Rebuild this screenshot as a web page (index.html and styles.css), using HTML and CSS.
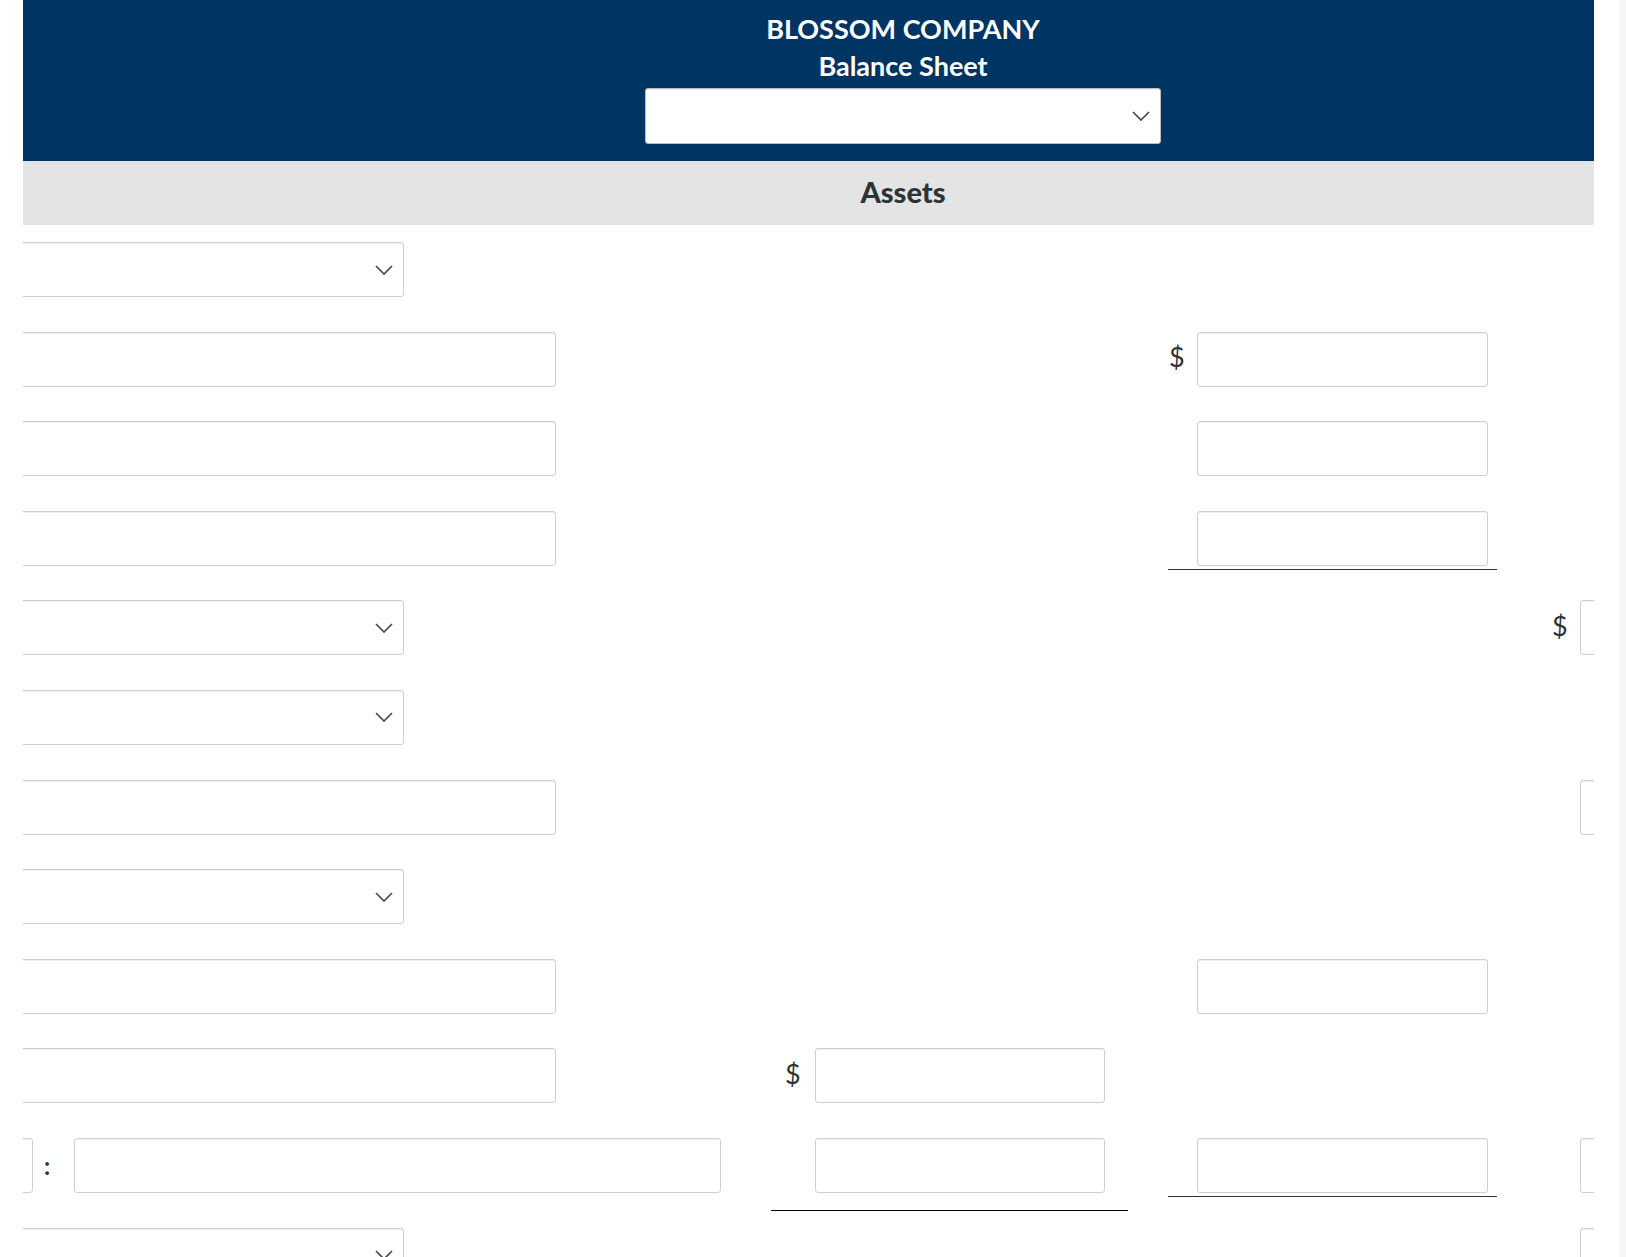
FILE: index.html
```html
<!DOCTYPE html>
<html lang="en">
<head>
<meta charset="utf-8">
<title>Blossom Company Balance Sheet</title>
<link rel="stylesheet" href="styles.css">
</head>
<body>
<div class="page">
  <div class="gutter-left"></div>
  <div class="viewport">
    <div class="sheet">
      <header class="sheet-head">
        <div class="title">BLOSSOM COMPANY</div>
        <div class="title">Balance Sheet</div>
        <div class="select head-select"><svg class="chev" width="18" height="10" viewBox="0 0 18 10"><path d="M1 1 L9 9 L17 1" fill="none" stroke="#4a4a4a" stroke-width="1.7"/></svg></div>
      </header>
      <div class="band">Assets</div>
      <div class="rows">
        <div class="row">
          <div class="c1"><div class="select sel-w"><svg class="chev" width="18" height="10" viewBox="0 0 18 10"><path d="M1 1 L9 9 L17 1" fill="none" stroke="#4a4a4a" stroke-width="1.7"/></svg></div></div>
        </div>
        <div class="row">
          <div class="c1"><input class="field text-w" type="text"></div>
          <div class="c3"><span class="dollar d3">$</span><input class="field amt" type="text"></div>
        </div>
        <div class="row">
          <div class="c1"><input class="field text-w" type="text"></div>
          <div class="c3"><span class="dollar d3"></span><input class="field amt" type="text"></div>
        </div>
        <div class="row">
          <div class="c1"><input class="field text-w" type="text"></div>
          <div class="c3 total3"><span class="dollar d3"></span><input class="field amt" type="text"></div>
        </div>
        <div class="row">
          <div class="c1"><div class="select sel-w"><svg class="chev" width="18" height="10" viewBox="0 0 18 10"><path d="M1 1 L9 9 L17 1" fill="none" stroke="#4a4a4a" stroke-width="1.7"/></svg></div></div>
          <div class="c4"><span class="dollar d4">$</span><input class="field amt" type="text"></div>
        </div>
        <div class="row">
          <div class="c1"><div class="select sel-w"><svg class="chev" width="18" height="10" viewBox="0 0 18 10"><path d="M1 1 L9 9 L17 1" fill="none" stroke="#4a4a4a" stroke-width="1.7"/></svg></div></div>
        </div>
        <div class="row">
          <div class="c1"><input class="field text-w" type="text"></div>
          <div class="c4"><span class="dollar d4"></span><input class="field amt" type="text"></div>
        </div>
        <div class="row">
          <div class="c1"><div class="select sel-w"><svg class="chev" width="18" height="10" viewBox="0 0 18 10"><path d="M1 1 L9 9 L17 1" fill="none" stroke="#4a4a4a" stroke-width="1.7"/></svg></div></div>
        </div>
        <div class="row">
          <div class="c1"><input class="field text-w" type="text"></div>
          <div class="c3"><span class="dollar d3"></span><input class="field amt" type="text"></div>
        </div>
        <div class="row">
          <div class="c1"><input class="field text-w" type="text"></div>
          <div class="c2"><span class="dollar d2">$</span><input class="field amt2" type="text"></div>
        </div>
        <div class="row">
          <div class="c1"><input class="field small-w" type="text"><span class="colon">:</span><input class="field long-w" type="text"></div>
          <div class="c2 total2"><span class="dollar d2"></span><input class="field amt2" type="text"></div>
          <div class="c3 total3"><span class="dollar d3"></span><input class="field amt" type="text"></div>
          <div class="c4"><span class="dollar d4"></span><input class="field amt" type="text"></div>
        </div>
        <div class="row">
          <div class="c1"><div class="select sel-w"><svg class="chev" width="18" height="10" viewBox="0 0 18 10"><path d="M1 1 L9 9 L17 1" fill="none" stroke="#4a4a4a" stroke-width="1.7"/></svg></div></div>
          <div class="c4"><span class="dollar d4"></span><input class="field amt" type="text"></div>
        </div>
      </div>
    </div>
  </div>
  <div class="gutter-right"></div>
  <div class="scroll-strip"></div>
</div>
</body>
</html>
```
FILE: styles.css
```css
html, body {
  margin: 0;
  padding: 0;
  overflow: hidden;
  background: #fff;
  font-family: Lato, "Open Sans", Arial, sans-serif;
}

.page {
  display: flex;
  height: 1257px;
  overflow: hidden;
}

.gutter-left {
  flex: 0 0 23px;
}

.viewport {
  flex: 0 0 1571px;
  height: 1257px;
  overflow: hidden;
}

.gutter-right {
  flex: 0 0 25px;
}

.scroll-strip {
  flex: 0 0 7px;
  background: #f6f6f6;
}

.sheet {
  margin-left: -40px;
  width: 1840px;
}

.sheet-head {
  box-sizing: border-box;
  height: 161px;
  padding-top: 10px;
  background: #003462;
  display: flex;
  flex-direction: column;
  align-items: center;
}

.title {
  font-size: 27px;
  line-height: 37px;
  font-weight: 700;
  color: #fff;
}

.select {
  box-sizing: border-box;
  height: 55px;
  background: #fff;
  border: 1px solid #cfcfcf;
  border-radius: 3px;
  box-shadow: inset 0 1px 1px rgba(0, 0, 0, 0.06);
  display: flex;
  align-items: center;
  justify-content: flex-end;
  padding-right: 10px;
}

.head-select {
  width: 516px;
  height: 56px;
  margin-top: 4px;
  border-color: #bdbdbd;
}

.chev {
  display: block;
}

.band {
  box-sizing: border-box;
  height: 64px;
  padding-bottom: 4px;
  background: #e4e4e4;
  display: flex;
  align-items: center;
  justify-content: center;
  font-size: 29px;
  font-weight: 900;
  color: #2d3436;
}

.rows {
  padding-top: 17px;
}

.row {
  display: grid;
  grid-template-columns: 788px 357px 40px 329px 400px;
  height: 89.6px;
  align-items: start;
}

.c1 {
  grid-column: 1;
  padding-left: 10px;
  display: flex;
  align-items: center;
}

.c2 {
  grid-column: 2;
  padding-left: 14px;
  display: flex;
  align-items: center;
}

.c3 {
  grid-column: 4;
  padding-left: 1px;
  display: flex;
  align-items: center;
}

.c4 {
  grid-column: 5;
  padding-left: 55px;
  display: flex;
  align-items: center;
}

.total2 {
  padding-bottom: 17px;
  border-bottom: 1px solid #000;
}

.total3 {
  padding-bottom: 3px;
  border-bottom: 1px solid #2d3436;
}

.dollar {
  display: block;
  font-size: 27px;
  line-height: 30px;
  color: #2d3436;
  margin-top: -4px;
}

.d2 { flex: 0 0 30px; }
.d3 { flex: 0 0 28px; }
.d4 { flex: 0 0 28px; }

.field {
  box-sizing: border-box;
  display: block;
  height: 55px;
  margin: 0;
  padding: 0 10px;
  background: #fff;
  border: 1px solid #cfcfcf;
  border-radius: 3px;
  box-shadow: inset 0 1px 1px rgba(0, 0, 0, 0.06);
  font-family: Lato, Arial, sans-serif;
  font-size: 18px;
  outline: none;
}

.text-w { width: 563px; }
.sel-w { width: 411px; }
.amt { width: 291px; }
.amt2 { width: 290px; }
.small-w { width: 40px; }
.long-w { width: 647px; }

.colon {
  flex: 0 0 30px;
  padding-left: 11px;
  font-size: 24px;
  font-weight: 700;
  color: #2d3436;
}
```
